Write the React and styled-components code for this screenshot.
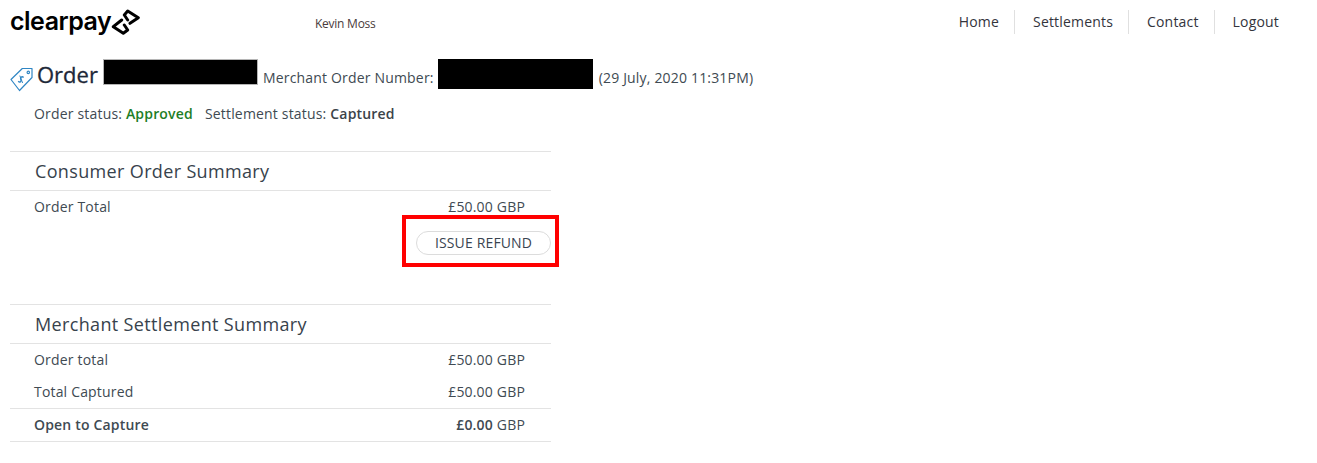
import React from 'react';
import styled, { createGlobalStyle } from 'styled-components';

const GlobalStyle = createGlobalStyle`
  html, body {
    margin: 0;
    background: #fff;
    color: #404a52;
    font-family: "Open Sans", "Liberation Sans", sans-serif;
    font-size: 14px;
    letter-spacing: 0.18px;
  }
`;

const Page = styled.div`
  width: 1317px;
  height: 463px;
  overflow: hidden;
`;

const Header = styled.header`
  height: 44px;
  display: flex;
  align-items: flex-start;
`;

const Logo = styled.div`
  width: 315px;
  padding: 5px 0 0 10px;
  box-sizing: border-box;
  display: flex;
  align-items: flex-start;
  color: #000;
`;

const LogoWord = styled.span`
  width: 100px;
  font-family: Inter, "Liberation Sans", sans-serif;
  font-size: 25px;
  line-height: 32px;
  font-weight: 600;
  letter-spacing: -0.5px;
`;

const LogoMark = styled.svg`
  margin-top: 4px;
`;

const UserName = styled.div`
  font-size: 12px;
  line-height: 17px;
  margin-top: 15px;
  letter-spacing: -0.25px;
  color: #4a3c3c;
`;

const Nav = styled.nav`
  margin-left: auto;
  margin-right: 22px;
  margin-top: 10px;
  display: flex;
`;

const NavLink = styled.a`
  height: 24px;
  line-height: 24px;
  padding: 0 15px 0 18px;
  color: #33343c;
  font-size: 14px;
  border-right: 1px solid ${(p) => (p.$last ? 'transparent' : '#e0e0e0')};
  &:first-child {
    padding-left: 0;
  }
`;

const TitleRow = styled.div`
  display: flex;
  align-items: flex-start;
  padding-left: 10px;
  height: 48px;
`;

const TagWrap = styled.div`
  margin-top: 22px;
  height: 26px;
`;

const Order = styled.h1`
  margin: 15px 6px 0 2px;
  font-size: 22px;
  line-height: 30px;
  font-weight: 400;
  letter-spacing: 0;
  color: #1d2838;
  -webkit-text-stroke: 0.3px #1d2838;
`;

const Redacted = styled.div`
  width: ${(p) => p.$w}px;
  height: ${(p) => p.$h}px;
  margin-top: ${(p) => p.$top}px;
  background: #000;
  box-shadow: ${(p) => (p.$edge ? '0 0 0 1px #b5b5b5' : 'none')};
`;

const TitleText = styled.span`
  margin: 24px ${(p) => p.$right}px 0 ${(p) => p.$left}px;
  line-height: 19px;
  font-size: 14px;
  white-space: nowrap;
`;

const Status = styled.div`
  padding-left: 34px;
  height: 59px;
  padding-top: 12px;
  box-sizing: border-box;
  line-height: 20px;
  display: flex;
  gap: 12px;
`;

const Strong = styled.b`
  font-weight: 600;
  color: ${(p) => p.$color || '#3b4349'};
`;

const Section = styled.section`
  width: 541px;
  margin-left: 10px;
  border-top: 1px solid #e3e3e3;
`;

const SectionTitle = styled.h2`
  margin: 0;
  height: 38px;
  padding-left: 25px;
  line-height: 38px;
  font-size: 18px;
  font-weight: 400;
  letter-spacing: 0.35px;
  color: #37424c;
  border-bottom: 1px solid #e3e3e3;
`;

const Row = styled.div`
  display: flex;
  justify-content: space-between;
  padding: 0 26px 0 24px;
  height: ${(p) => p.$h}px;
  line-height: ${(p) => p.$lh}px;
  border-bottom: ${(p) => (p.$ruled ? '1px solid #e3e3e3' : 'none')};
  font-weight: ${(p) => (p.$bold ? 600 : 400)};
`;

const Thin = styled.span`
  font-weight: 400;
`;

const RefundRow = styled.div`
  position: relative;
  height: 89px;
  display: flex;
  justify-content: flex-end;
  align-items: flex-start;
`;

const RefundButton = styled.button`
  width: 135px;
  height: 24px;
  margin-top: 16px;
  padding: 0;
  border: 1px solid #dcdcdc;
  border-radius: 12px;
  background: #fff;
  color: #3a4450;
  font-family: inherit;
  font-size: 14px;
  letter-spacing: 0.15px;
  line-height: 22px;
`;

const Highlight = styled.div`
  position: absolute;
  left: 392px;
  top: 0;
  width: 157px;
  height: 52px;
  box-sizing: border-box;
  border: 4px solid #f00;
  pointer-events: none;
`;

const ClearpayMark = () => (
  <LogoMark width="30" height="26" viewBox="0 0 30 26" fill="none" stroke="#000" strokeWidth="3" strokeLinejoin="round" strokeLinecap="round">
    <path d="M17.7 11 L14.3 6 L17.7 2 L28.3 8.7 L20 14.3" />
    <path d="M11.7 11 L3.3 17.7 L13.3 24.3 L17.7 21 L14.3 16" />
  </LogoMark>
);

const TagIcon = () => (
  <svg width="25" height="26" viewBox="0 0 25 26" fill="none" stroke="#2f86c4" strokeWidth="1.2" strokeLinejoin="round">
    <path d="M1 13.5 L12.3 2.5 L22 2.5 L22 11.5 L9.5 24.5 Z" />
    <circle cx="18.3" cy="6.4" r="1.2" />
    <path d="M13.6 11.5 C12 10 9.8 11.4 10.8 13.4 C11.8 15.2 10 17 8.2 15.3" strokeWidth="1.4" />
    <path d="M9.8 9.6 L12.6 17" strokeWidth="1" />
  </svg>
);

export default function App() {
  return (
    <Page>
      <GlobalStyle />
      <Header>
        <Logo>
          <LogoWord>clearpay</LogoWord>
          <ClearpayMark />
        </Logo>
        <UserName>Kevin Moss</UserName>
        <Nav>
          <NavLink>Home</NavLink>
          <NavLink>Settlements</NavLink>
          <NavLink>Contact</NavLink>
          <NavLink $last>Logout</NavLink>
        </Nav>
      </Header>
      <TitleRow>
        <TagWrap><TagIcon /></TagWrap>
        <Order>Order</Order>
        <Redacted $w={153} $h={24} $top={16} $edge />
        <TitleText $left={6} $right={4}>Merchant Order Number:</TitleText>
        <Redacted $w={155} $h={30} $top={15} />
        <TitleText $left={6} $right={0}>(29 July, 2020 11:31PM)</TitleText>
      </TitleRow>
      <Status>
        <span>Order status: <Strong $color="#1e7e26">Approved</Strong></span>
        <span>Settlement status: <Strong>Captured</Strong></span>
      </Status>
      <Section>
        <SectionTitle>Consumer Order Summary</SectionTitle>
        <Row $h={24} $lh={32}>
          <span>Order Total</span>
          <span>£50.00 GBP</span>
        </Row>
        <RefundRow>
          <RefundButton>ISSUE REFUND</RefundButton>
          <Highlight />
        </RefundRow>
      </Section>
      <Section>
        <SectionTitle>Merchant Settlement Summary</SectionTitle>
        <Row $h={32} $lh={32}>
          <span>Order total</span>
          <span>£50.00 GBP</span>
        </Row>
        <Row $h={32} $lh={32} $ruled>
          <span>Total Captured</span>
          <span>£50.00 GBP</span>
        </Row>
        <Row $h={32} $lh={32} $ruled $bold>
          <span>Open to Capture</span>
          <span>£0.00 <Thin>GBP</Thin></span>
        </Row>
      </Section>
    </Page>
  );
}
